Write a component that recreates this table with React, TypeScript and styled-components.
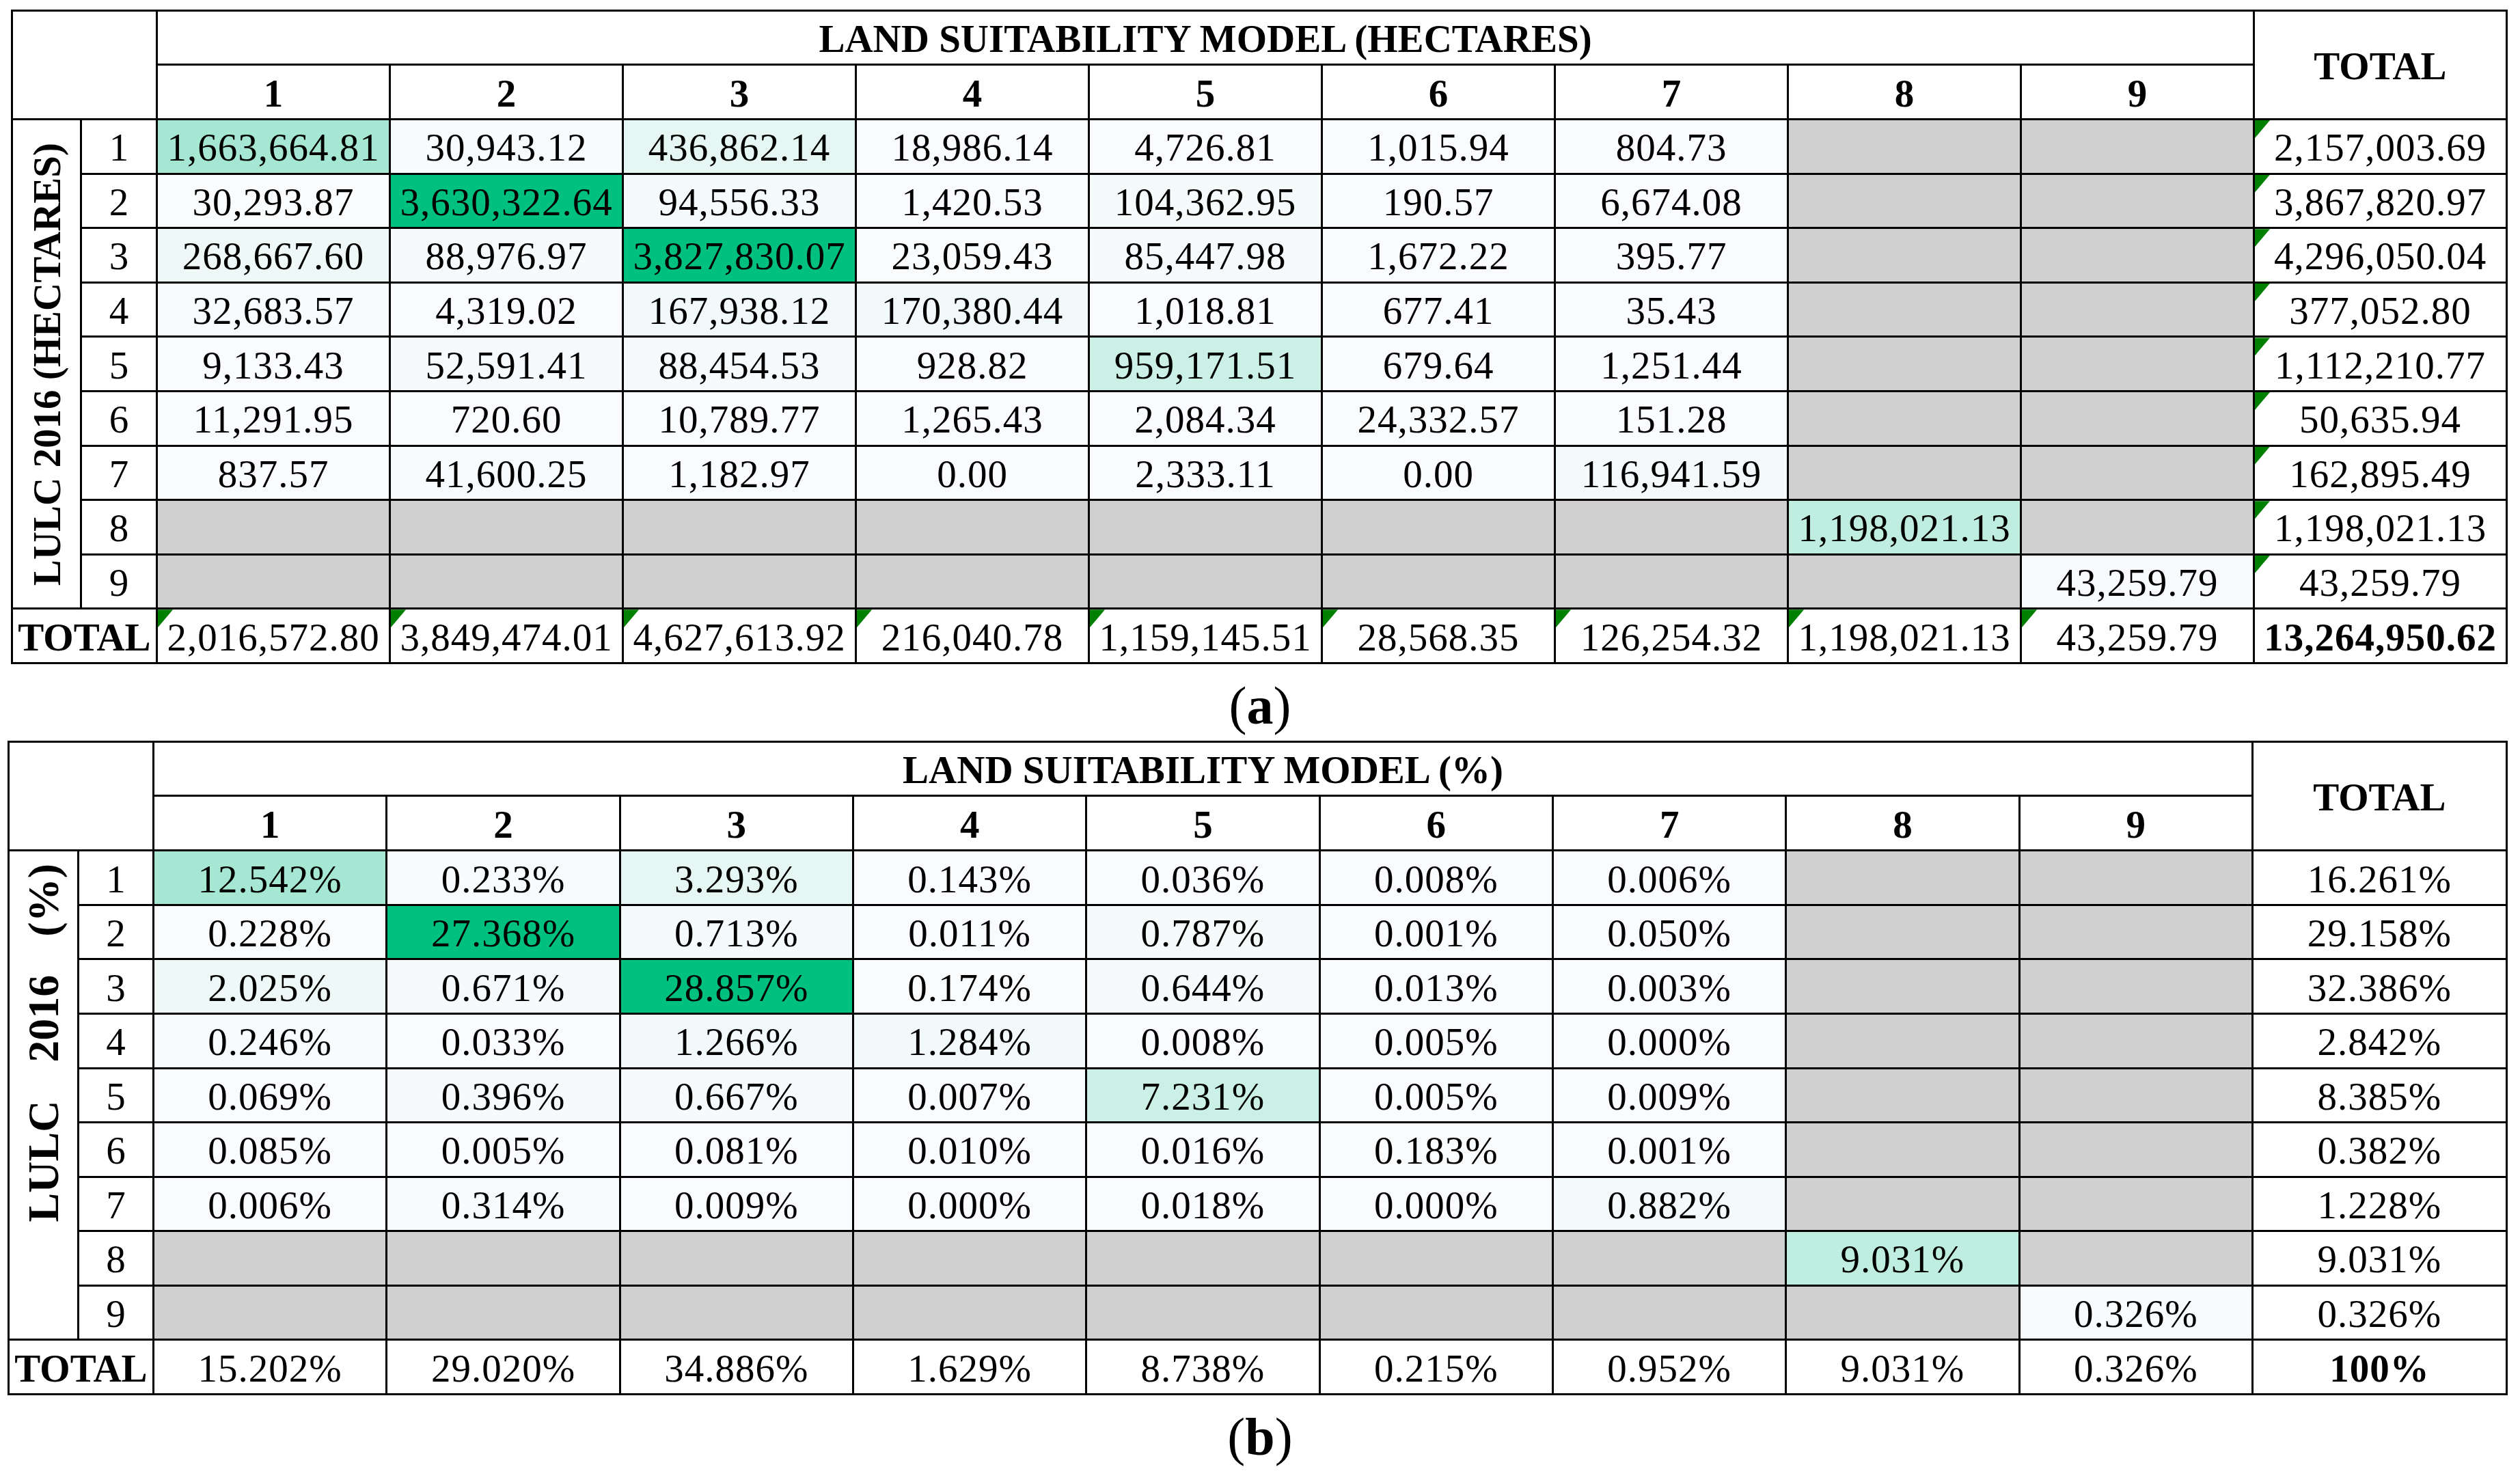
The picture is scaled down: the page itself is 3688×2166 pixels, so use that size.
import { Fragment } from "react";
import styled, { createGlobalStyle, css } from "styled-components";

type Row = (string | null)[];

interface MatrixData {
  title: string;
  sideLabel: string;
  sideAlign: "center" | "flex-start";
  sideSize: number;
  sideGap: number;
  rows: Row[];
  rowTotals: string[];
  colTotals: string[];
  grandTotal: string;
  flags: boolean;
  left: number;
  cols: string;
  rowsTemplate: string;
  caption: string;
}

const GREY = "#d0d0d0";
const LOW = [250, 251, 254];
const HIGH = [0, 192, 128];
const classes = [1, 2, 3, 4, 5, 6, 7, 8, 9];

const parse = (s: string) => parseFloat(s.replace(/[,%]/g, ""));

// colour scale, close to the excel conditional format of the original
const shade = (value: string, max: number) => {
  const t = parse(value) / max;
  const f = t >= 0.9 ? 1 : Math.max(Math.pow(t, 1.3), t * 0.75);
  const c = LOW.map((l, i) => Math.round(l + (HIGH[i] - l) * f));
  return `rgb(${c.join(",")})`;
};

const __ = null;

const hectares: MatrixData = {
  title: "LAND SUITABILITY MODEL (HECTARES)",
  sideLabel: "LULC 2016 (HECTARES)",
  sideAlign: "center",
  sideSize: 57,
  sideGap: 0,
  rows: [
    ["1,663,664.81", "30,943.12", "436,862.14", "18,986.14", "4,726.81", "1,015.94", "804.73", __, __],
    ["30,293.87", "3,630,322.64", "94,556.33", "1,420.53", "104,362.95", "190.57", "6,674.08", __, __],
    ["268,667.60", "88,976.97", "3,827,830.07", "23,059.43", "85,447.98", "1,672.22", "395.77", __, __],
    ["32,683.57", "4,319.02", "167,938.12", "170,380.44", "1,018.81", "677.41", "35.43", __, __],
    ["9,133.43", "52,591.41", "88,454.53", "928.82", "959,171.51", "679.64", "1,251.44", __, __],
    ["11,291.95", "720.60", "10,789.77", "1,265.43", "2,084.34", "24,332.57", "151.28", __, __],
    ["837.57", "41,600.25", "1,182.97", "0.00", "2,333.11", "0.00", "116,941.59", __, __],
    [__, __, __, __, __, __, __, "1,198,021.13", __],
    [__, __, __, __, __, __, __, __, "43,259.79"],
  ],
  rowTotals: [
    "2,157,003.69", "3,867,820.97", "4,296,050.04", "377,052.80", "1,112,210.77",
    "50,635.94", "162,895.49", "1,198,021.13", "43,259.79",
  ],
  colTotals: [
    "2,016,572.80", "3,849,474.01", "4,627,613.92", "216,040.78", "1,159,145.51",
    "28,568.35", "126,254.32", "1,198,021.13", "43,259.79",
  ],
  grandTotal: "13,264,950.62",
  flags: true,
  left: 16,
  cols: "101px 111px repeat(9, 341px) 370px",
  rowsTemplate: "79px 80px repeat(9, 79.6px) 80px",
  caption: "a",
};

const percent: MatrixData = {
  title: "LAND SUITABILITY MODEL (%)",
  sideLabel: "LULC 2016 (%)",
  sideAlign: "flex-start",
  sideSize: 64,
  sideGap: 40,
  rows: [
    ["12.542%", "0.233%", "3.293%", "0.143%", "0.036%", "0.008%", "0.006%", __, __],
    ["0.228%", "27.368%", "0.713%", "0.011%", "0.787%", "0.001%", "0.050%", __, __],
    ["2.025%", "0.671%", "28.857%", "0.174%", "0.644%", "0.013%", "0.003%", __, __],
    ["0.246%", "0.033%", "1.266%", "1.284%", "0.008%", "0.005%", "0.000%", __, __],
    ["0.069%", "0.396%", "0.667%", "0.007%", "7.231%", "0.005%", "0.009%", __, __],
    ["0.085%", "0.005%", "0.081%", "0.010%", "0.016%", "0.183%", "0.001%", __, __],
    ["0.006%", "0.314%", "0.009%", "0.000%", "0.018%", "0.000%", "0.882%", __, __],
    [__, __, __, __, __, __, __, "9.031%", __],
    [__, __, __, __, __, __, __, __, "0.326%"],
  ],
  rowTotals: [
    "16.261%", "29.158%", "32.386%", "2.842%", "8.385%", "0.382%", "1.228%", "9.031%", "0.326%",
  ],
  colTotals: [
    "15.202%", "29.020%", "34.886%", "1.629%", "8.738%", "0.215%", "0.952%", "9.031%", "0.326%",
  ],
  grandTotal: "100%",
  flags: false,
  left: 11,
  cols: "102px 110px repeat(9, 341.33px) 372px",
  rowsTemplate: "79px 80px repeat(9, 79.55px) 80px",
  caption: "b",
};

const GlobalStyle = createGlobalStyle`
  html, body {
    margin: 0;
    padding: 0;
    background: #fff;
  }
  body {
    font-family: "Liberation Serif", "Times New Roman", serif;
    color: #000;
  }
`;

const Page = styled.div`
  width: 3688px;
  height: 2166px;
  padding-top: 14px;
  box-sizing: border-box;
  overflow: hidden;
`;

const Sheet = styled.div<{ $cols: string; $rows: string; $left: number }>`
  display: grid;
  grid-template-columns: ${(p) => p.$cols};
  grid-template-rows: ${(p) => p.$rows};
  width: max-content;
  margin-left: ${(p) => p.$left}px;
  border-left: 3px solid #000;
  border-top: 3px solid #000;
`;

const cellBase = css`
  position: relative;
  box-sizing: border-box;
  border-right: 3px solid #000;
  border-bottom: 3px solid #000;
  display: flex;
  align-items: center;
  justify-content: center;
  font-size: 57px;
  white-space: nowrap;
  padding-top: 3px;
`;

const Cell = styled.div<{ $bg?: string; $bold?: boolean; $flag?: boolean }>`
  ${cellBase};
  background: ${(p) => p.$bg ?? "#fff"};
  font-weight: ${(p) => (p.$bold ? 700 : 400)};
  letter-spacing: 1px;

  ${(p) =>
    p.$flag &&
    css`
      &::before {
        content: "";
        position: absolute;
        top: 0;
        left: 0;
        width: 22px;
        height: 26px;
        background: #008000;
        clip-path: polygon(0 0, 100% 0, 0 100%);
      }
    `}
`;

const Corner = styled.div`
  ${cellBase};
  grid-column: 1 / 3;
  grid-row: 1 / 3;
`;

const TitleCell = styled.div`
  ${cellBase};
  grid-column: 3 / 12;
  grid-row: 1;
  font-weight: 700;
`;

const TotalHead = styled.div`
  ${cellBase};
  grid-column: 12;
  grid-row: 1 / 3;
  font-weight: 700;
`;

const HeadCell = styled.div`
  ${cellBase};
  font-weight: 700;
`;

const SideLabel = styled.div<{ $align: string; $size: number; $gap: number }>`
  ${cellBase};
  grid-column: 1;
  grid-row: 3 / 12;
  flex-direction: column;
  justify-content: ${(p) => p.$align};
  padding: ${(p) => (p.$align === "center" ? "0" : "18px 0 0")};
  font-size: ${(p) => p.$size}px;
  font-weight: 700;

  span {
    writing-mode: vertical-rl;
    transform: rotate(180deg);
    line-height: 1;
    word-spacing: ${(p) => p.$gap}px;
  }
`;

const RowNum = styled.div`
  ${cellBase};
`;

const TotalLabel = styled.div`
  ${cellBase};
  grid-column: 1 / 3;
  grid-row: 12;
  font-weight: 700;
`;

const Caption = styled.div`
  height: 112px;
  box-sizing: border-box;
  padding-top: 10px;
  line-height: 102px;
  text-align: center;
  font-size: 78px;

  b {
    font-weight: 700;
  }
`;

function Matrix({ data }: { data: MatrixData }) {
  const max = Math.max(
    ...data.rows.flat().filter((v): v is string => v !== null).map(parse)
  );

  return (
    <>
      <Sheet $cols={data.cols} $rows={data.rowsTemplate} $left={data.left}>
        <Corner />
        <TitleCell>{data.title}</TitleCell>
        <TotalHead>TOTAL</TotalHead>
        {classes.map((n) => (
          <HeadCell key={n}>{n}</HeadCell>
        ))}
        <SideLabel $align={data.sideAlign} $size={data.sideSize} $gap={data.sideGap}>
          <span>{data.sideLabel}</span>
        </SideLabel>
        {data.rows.map((row, r) => (
          <Fragment key={r}>
            <RowNum>{r + 1}</RowNum>
            {row.map((v, c) =>
              v === null ? (
                <Cell key={c} $bg={GREY} />
              ) : (
                <Cell key={c} $bg={shade(v, max)}>
                  {v}
                </Cell>
              )
            )}
            <Cell $flag={data.flags}>{data.rowTotals[r]}</Cell>
          </Fragment>
        ))}
        <TotalLabel>TOTAL</TotalLabel>
        {data.colTotals.map((v, c) => (
          <Cell key={c} $flag={data.flags}>
            {v}
          </Cell>
        ))}
        <Cell $bold>{data.grandTotal}</Cell>
      </Sheet>
      <Caption>
        (<b>{data.caption}</b>)
      </Caption>
    </>
  );
}

export default function App() {
  return (
    <>
      <GlobalStyle />
      <Page>
        <Matrix data={hectares} />
        <Matrix data={percent} />
      </Page>
    </>
  );
}
